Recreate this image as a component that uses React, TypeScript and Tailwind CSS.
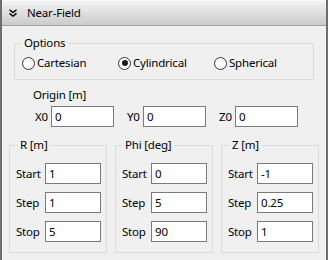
import React from 'react';

function Radio({ label, checked }: { label: string; checked?: boolean }) {
    return (
        <label className="flex items-center w-[96px] h-[16px]">
            <span className="w-[13px] h-[13px] rounded-full border border-[#333333] bg-white flex items-center justify-center shrink-0">
                {checked && <span className="w-[6px] h-[6px] rounded-full bg-[#1a1a1a]" />}
            </span>
            <span className="ml-[2px]">{label}</span>
        </label>
    );
}

function Field({ value, className = 'w-[63px]' }: { value: string; className?: string }) {
    return (
        <input
            readOnly
            value={value}
            className={`h-[21px] ${className} border border-[#7a7a7a] bg-white px-[3px] text-[11.5px] tracking-[-0.2px] text-black outline-none`}
        />
    );
}

function RangeGroup({ title, values, legendGap }: { title: string; values: string[]; legendGap: string }) {
    const labels = ['Start', 'Step', 'Stop'];
    return (
        <fieldset className="w-[98px] border border-[#dcdcdc] pl-[6px] pt-[10px] pb-[10px]">
            <legend className={`${legendGap} px-[3px] leading-[16px]`}>{title}</legend>
            <div className="flex flex-col gap-[8px]">
                {labels.map((l, i) => (
                    <div key={l} className="flex items-center">
                        <span className="w-[29px]">{l}</span>
                        <Field value={values[i]} className="w-[56px]" />
                    </div>
                ))}
            </div>
        </fieldset>
    );
}

export default function App() {
    return (
        <div className="w-[328px] h-[260px] bg-[#f0f0f0] border-x-2 border-[#6e6e6e] text-[11.5px] tracking-[-0.2px] leading-[16px] text-black font-['Noto_Sans',sans-serif] overflow-hidden">
            {/* title bar */}
            <div className="h-[26px] flex items-center border-t border-t-[#fafafa] border-b border-b-[#a0a0a0] bg-gradient-to-b from-[#f3f3f3] to-[#cbcbcb]">
                <svg width="8" height="8" viewBox="0 0 8 8" className="ml-[7px]" fill="none" stroke="#000" strokeWidth="1.4">
                    <polyline points="0.5,0.8 4,3.6 7.5,0.8" />
                    <polyline points="0.5,4.4 4,7.2 7.5,4.4" />
                </svg>
                <span className="ml-[10px]">Near-Field</span>
            </div>

            {/* options */}
            <fieldset className="mt-[9px] ml-[12px] w-[300px] border border-[#dcdcdc] pl-[7px] pt-[4px] pb-[8px]">
                <legend className="-ml-px px-[3px] leading-[16px]">Options</legend>
                <div className="flex">
                    <Radio label="Cartesian" />
                    <Radio label="Cylindrical" checked />
                    <Radio label="Spherical" />
                </div>
            </fieldset>

            {/* origin */}
            <div className="mt-[7px] ml-[31px]">Origin [m]</div>
            <div className="mt-[3px] ml-[33px] flex gap-[13px]">
                {[['X0', '0'], ['Y0', '0'], ['Z0', '0']].map(([l, v]) => (
                    <div key={l} className="flex items-center">
                        <span className="w-[16px]">{l}</span>
                        <Field value={v} />
                    </div>
                ))}
            </div>

            {/* ranges */}
            <div className="mt-[10px] ml-[7px] flex gap-[8px]">
                <RangeGroup title="R [m]" values={['1', '1', '5']} legendGap="ml-px" />
                <RangeGroup title="Phi [deg]" values={['0', '5', '90']} legendGap="ml-0" />
                <RangeGroup title="Z [m]" values={['-1', '0.25', '1']} legendGap="ml-px" />
            </div>
        </div>
    );
}
